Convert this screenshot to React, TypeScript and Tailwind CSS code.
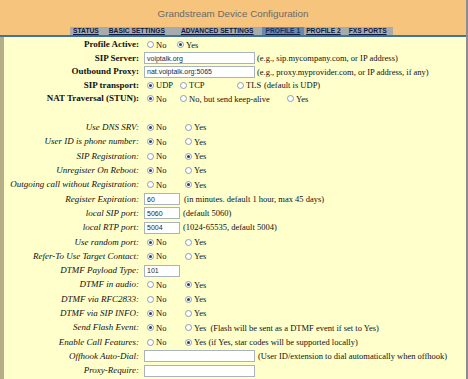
import React from "react";

const serif = "font-['Liberation_Serif','Times_New_Roman',serif]";
const sans = "font-['Liberation_Sans',Arial,sans-serif]";

function Radio({ on }: { on?: boolean }) {
  return (
    <span className="relative inline-block w-[7px] h-[7px] rounded-full border border-[#8a9cb2] bg-white shrink-0">
      {on && (
        <span className="absolute left-[1px] top-[1px] w-[3px] h-[3px] rounded-full bg-[#2f3f55]" />
      )}
    </span>
  );
}

function Opt({ label, on, w }: { label: string; on?: boolean; w?: string }) {
  return (
    <span className={`flex items-center shrink-0 ${w ?? ""}`}>
      <Radio on={on} />
      <span className="ml-[2px] whitespace-nowrap">{label}</span>
    </span>
  );
}

function Input({ value, w }: { value?: string; w: string }) {
  return (
    <span
      className={`${w} h-[12px] shrink-0 flex items-center border border-[#a9b3bd] bg-white pl-[2px] text-[7px] text-[#1e2a3a] ${sans}`}
    >
      {value}
    </span>
  );
}

function Row({
  label,
  bold,
  h,
  children,
}: {
  label: string;
  bold?: boolean;
  h: string;
  children?: React.ReactNode;
}) {
  return (
    <div className={`flex items-center ${h}`}>
      <span
        className={`w-[135px] shrink-0 text-right whitespace-nowrap text-[9px] ${
          bold ? "font-bold" : "italic"
        }`}
      >
        {label}
      </span>
      <div className="ml-[5px] flex items-center whitespace-nowrap">{children}</div>
    </div>
  );
}

function NoYes({ yes }: { yes?: boolean }) {
  return (
    <div className="flex items-center ml-[3px]">
      <Opt label="No" on={!yes} w="w-[38px]" />
      <Opt label="Yes" on={yes} />
    </div>
  );
}

export default function App() {
  const H1 = "h-[13.5px]";
  const H2 = "h-[14.3px]";
  return (
    <div
      className={`w-[468px] h-[379px] overflow-hidden flex flex-col bg-[#ffffcc] border-r-2 border-[#8d8d8d] text-[8.5px] leading-none text-[#111] ${serif}`}
    >
      {/* Header */}
      <div className="bg-[#f6c47c] h-[35px] flex flex-col shrink-0">
        <div
          className={`h-[27px] flex items-center justify-center text-[9.8px] text-[#6a6a6a] ${sans}`}
        >
          Grandstream Device Configuration
        </div>
        <div className="flex">
          <div
            className={`ml-[70px] h-[8px] pr-[6px] whitespace-nowrap bg-[#a7abae] flex items-stretch text-[6.7px] font-bold underline text-[#101840] ${sans}`}
          >
            <span className="ml-[3px] shrink-0 flex items-center">STATUS</span>
            <span className="ml-[10px] shrink-0 flex items-center">BASIC SETTINGS</span>
            <span className="ml-[16px] shrink-0 flex items-center">ADVANCED SETTINGS</span>
            <span className="ml-[8px] shrink-0 px-[4px] bg-[#6588ab] flex items-center text-[#17306a]">
              PROFILE 1
            </span>
            <span className="ml-[2px] shrink-0 flex items-center">PROFILE 2</span>
            <span className="ml-[8px] shrink-0 flex items-center">FXS PORTS</span>
          </div>
        </div>
      </div>
      <div className="h-[2px] bg-[#3f7698] shrink-0" />

      {/* Body */}
      <div className="flex-1 border-l-4 border-[#b6ae86] pt-[1px]">
        <Row label="Profile Active:" bold h={H1}>
          <div className="flex items-center ml-[3px]">
            <Opt label="No" w="w-[30px]" />
            <Opt label="Yes" on />
          </div>
        </Row>
        <Row label="SIP Server:" bold h={H1}>
          <Input value="voiptalk.org" w="w-[111px]" />
          <span className="ml-[2px]">(e.g., sip.mycompany.com, or IP address)</span>
        </Row>
        <Row label="Outbound Proxy:" bold h={H1}>
          <Input value="nat.voiptalk.org:5065" w="w-[111px]" />
          <span className="ml-[2px]">
            (e.g., proxy.myprovider.com, or IP address, if any)
          </span>
        </Row>
        <Row label="SIP transport:" bold h={H1}>
          <div className="flex items-center ml-[3px]">
            <Opt label="UDP" on w="w-[33px]" />
            <Opt label="TCP" w="w-[57px]" />
            <Opt label="TLS" w="w-[27px]" />
            <span>(default is UDP)</span>
          </div>
        </Row>
        <Row label="NAT Traversal (STUN):" bold h={H1}>
          <div className="flex items-center ml-[3px]">
            <Opt label="No" on w="w-[33px]" />
            <Opt label="No, but send keep-alive" w="w-[107px]" />
            <Opt label="Yes" />
          </div>
        </Row>
        <div className="h-[15px]" />

        <Row label="Use DNS SRV:" h={H2}>
          <NoYes />
        </Row>
        <Row label="User ID is phone number:" h={H2}>
          <NoYes />
        </Row>
        <Row label="SIP Registration:" h={H2}>
          <NoYes yes />
        </Row>
        <Row label="Unregister On Reboot:" h={H2}>
          <NoYes />
        </Row>
        <Row label="Outgoing call without Registration:" h={H2}>
          <NoYes yes />
        </Row>
        <Row label="Register Expiration:" h={H2}>
          <Input value="60" w="w-[36px]" />
          <span className="ml-[4px]">(in minutes. default 1 hour, max 45 days)</span>
        </Row>
        <Row label="local SIP port:" h={H2}>
          <Input value="5060" w="w-[36px]" />
          <span className="ml-[3px]">(default 5060)</span>
        </Row>
        <Row label="local RTP port:" h={H2}>
          <Input value="5004" w="w-[36px]" />
          <span className="ml-[3px]">(1024-65535, default 5004)</span>
        </Row>
        <Row label="Use random port:" h={H2}>
          <NoYes />
        </Row>
        <Row label="Refer-To Use Target Contact:" h={H2}>
          <NoYes />
        </Row>
        <Row label="DTMF Payload Type:" h={H2}>
          <Input value="101" w="w-[36px]" />
        </Row>
        <Row label="DTMF in audio:" h={H2}>
          <NoYes yes />
        </Row>
        <Row label="DTMF via RFC2833:" h={H2}>
          <NoYes yes />
        </Row>
        <Row label="DTMF via SIP INFO:" h={H2}>
          <NoYes />
        </Row>
        <Row label="Send Flash Event:" h={H2}>
          <div className="flex items-center ml-[3px]">
            <Opt label="No" on w="w-[38px]" />
            <Opt label="Yes" />
            <span className="ml-[4px]">
              (Flash will be sent as a DTMF event if set to Yes)
            </span>
          </div>
        </Row>
        <Row label="Enable Call Features:" h={H2}>
          <div className="flex items-center ml-[3px]">
            <Opt label="No" w="w-[38px]" />
            <Opt label="Yes" on />
            <span className="ml-[2px]">
              (if Yes, star codes will be supported locally)
            </span>
          </div>
        </Row>
        <Row label="Offhook Auto-Dial:" h={H2}>
          <Input w="w-[111px]" />
          <span className="ml-[3px]">
            (User ID/extension to dial automatically when offhook)
          </span>
        </Row>
        <Row label="Proxy-Require:" h={H2}>
          <Input w="w-[111px]" />
        </Row>
      </div>
    </div>
  );
}
